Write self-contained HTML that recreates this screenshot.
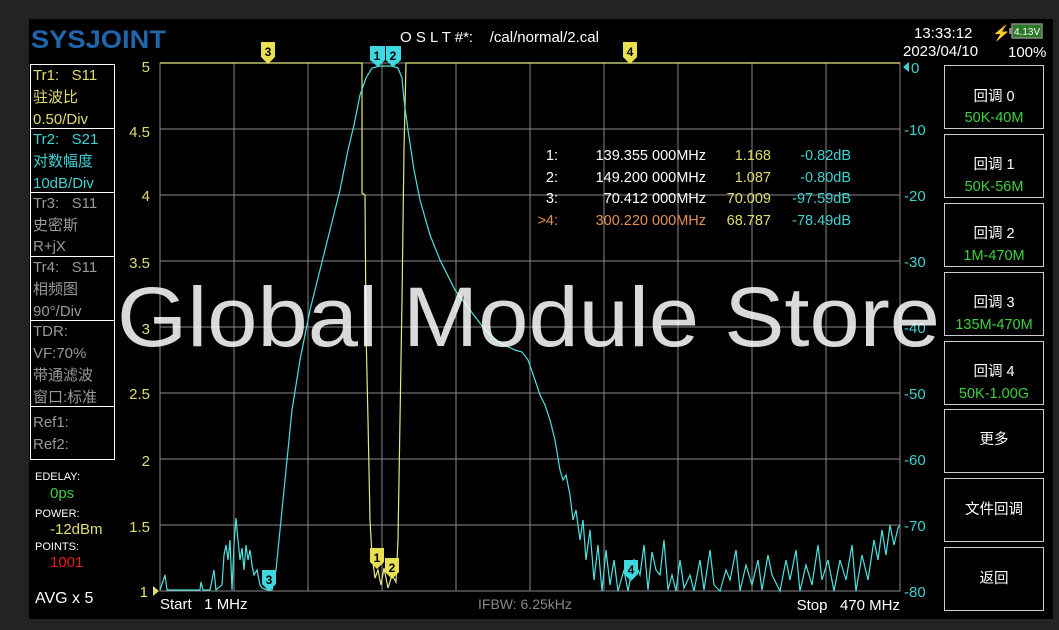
<!DOCTYPE html>
<html><head><meta charset="utf-8"><style>
html,body{margin:0;padding:0;background:#232323;}
svg{display:block}
text{font-family:"Liberation Sans","Noto Sans CJK SC",sans-serif;white-space:pre;}
</style></head><body>
<svg width="1059" height="630" viewBox="0 0 1059 630" xmlns="http://www.w3.org/2000/svg" xml:space="preserve">
<rect x="0" y="0" width="1059" height="630" fill="#232323"/>
<rect x="29" y="19" width="1024" height="600" fill="#000"/>
<text x="31" y="48" font-size="25" font-weight="bold" fill="#1f66ad" textLength="135" lengthAdjust="spacingAndGlyphs">SYSJOINT</text>
<text x="400" y="42" font-size="15" fill="#fff">O S L T #*:    /cal/normal/2.cal</text>
<text x="914" y="38" font-size="15" fill="#fff">13:33:12</text>
<text x="992" y="38" font-size="15" fill="#f0c020">⚡</text>
<rect x="1012" y="24" width="30" height="14" fill="#2a7a2a" stroke="#888" stroke-width="1.5"/>
<rect x="1009" y="28" width="3" height="6" fill="#888"/>
<text x="1014" y="35" font-size="10" fill="#fff">4.13V</text>
<text x="903" y="56" font-size="15" fill="#fff">2023/04/10</text>
<text x="1008" y="57" font-size="15" fill="#fff">100%</text>
<g stroke="#888" stroke-width="1">
<line x1="234" y1="63" x2="234" y2="591"/><line x1="308" y1="63" x2="308" y2="591"/><line x1="382" y1="63" x2="382" y2="591"/><line x1="456" y1="63" x2="456" y2="591"/><line x1="530" y1="63" x2="530" y2="591"/><line x1="604" y1="63" x2="604" y2="591"/><line x1="678" y1="63" x2="678" y2="591"/><line x1="752" y1="63" x2="752" y2="591"/><line x1="826" y1="63" x2="826" y2="591"/>
<line x1="160" y1="129" x2="900" y2="129"/><line x1="160" y1="195" x2="900" y2="195"/><line x1="160" y1="261" x2="900" y2="261"/><line x1="160" y1="327" x2="900" y2="327"/><line x1="160" y1="393" x2="900" y2="393"/><line x1="160" y1="459" x2="900" y2="459"/><line x1="160" y1="525" x2="900" y2="525"/>
<rect x="160" y="63" width="740" height="528" fill="none"/>
</g>
<g font-size="15" fill="#e0dc70" text-anchor="end">
<text x="150" y="72">5</text><text x="150" y="137">4.5</text><text x="150" y="201">4</text><text x="150" y="268">3.5</text><text x="150" y="334">3</text><text x="150" y="399">2.5</text><text x="150" y="466">2</text><text x="150" y="532">1.5</text><text x="148" y="597">1</text>
</g>
<polygon points="153,586 159,591 153,596" fill="#e0dc70"/>
<g font-size="15" fill="#40d0d0">
<text x="911" y="73">0</text><text x="904" y="135">-10</text><text x="904" y="201">-20</text><text x="904" y="267">-30</text><text x="904" y="333">-40</text><text x="904" y="399">-50</text><text x="904" y="465">-60</text><text x="904" y="531">-70</text><text x="904" y="597">-80</text>
</g>
<polygon points="909,62 903,67 909,72" fill="#40d0d0"/>
<polyline fill="none" stroke="#e8e880" stroke-width="1.2" points="160,63 362,63 362,193 365,195 366,330 368,420 370,520 372,555 375,578 378,570 381,585 384,568 388,588 392,575 396,582 398,540 400,420 402,300 404,150 406,63 900,63"/>
<polyline fill="none" stroke="#50e0e0" stroke-width="1.2" points="160,590 165,575 167,590 200,590 201,582 203,590 210,590 214,570 216,590 222,585 224,555 226,545 228,560 230,540 232,590 234,545 236,518 238,540 240,560 242,548 244,570 246,545 248,560 250,550 252,565 254,575 257,570 260,585 262,588 268,590 272,590 276,570 280,530 286,470 292,410 300,360 310,310 320,270 330,230 340,190 348,150 354,125 360,95 366,78 372,68 380,66 392,66 398,68 402,78 404,100 408,130 414,170 420,200 430,235 440,260 455,290 470,310 485,330 500,343 515,350 522,352 528,360 535,380 540,395 545,405 550,420 555,440 560,470 563,480 566,475 570,495 573,520 576,510 580,540 583,520 586,560 590,530 594,580 598,545 602,591 606,550 610,585 614,560 618,591 624,570 628,591 634,560 640,575 644,545 648,590 652,552 656,570 660,575 664,540 668,590 672,575 676,591 680,560 684,588 690,575 694,591 700,560 704,590 710,550 714,585 720,591 726,570 730,580 736,550 740,591 746,565 752,585 758,560 762,590 768,555 772,575 780,591 786,560 790,580 796,550 800,591 806,565 812,585 818,545 822,580 828,560 834,591 840,560 846,580 852,545 856,591 862,555 868,580 874,540 878,560 882,530 886,555 890,525 894,545 898,528 900,525"/>
<g font-size="12" font-weight="bold" text-anchor="middle">
<polygon points="261,42 275,42 275,57 268,64 261,57" fill="#e8e050"/><text x="268" y="56" fill="#000">3</text>
<polygon points="370,46 385,46 385,60 378,67 370,60" fill="#40d8e0"/><text x="377" y="60" fill="#000">1</text>
<polygon points="386,46 401,46 401,60 393,67 386,60" fill="#40d8e0"/><text x="393" y="60" fill="#000">2</text>
<polygon points="623,42 637,42 637,57 630,64 623,57" fill="#e8e050"/><text x="630" y="56" fill="#000">4</text>
<polygon points="370,548 384,548 384,562 377,569 370,562" fill="#e8e050"/><text x="377" y="562" fill="#000">1</text>
<polygon points="385,558 399,558 399,572 392,579 385,572" fill="#e8e050"/><text x="392" y="572" fill="#000">2</text>
<polygon points="262,570 276,570 276,584 269,591 262,584" fill="#40d8e0"/><text x="269" y="584" fill="#000">3</text>
<polygon points="624,560 638,560 638,574 631,581 624,574" fill="#40d8e0"/><text x="631" y="574" fill="#000">4</text>
</g>
<g font-size="14.5">
<g fill="#fff" text-anchor="end"><text x="558" y="160">1:</text><text x="558" y="182">2:</text><text x="558" y="203">3:</text></g>
<text x="558" y="225" fill="#e09050" text-anchor="end">&gt;4:</text>
<g fill="#fff" text-anchor="end"><text x="706" y="160">139.355 000MHz</text><text x="706" y="182">149.200 000MHz</text><text x="706" y="203">70.412 000MHz</text></g>
<text x="706" y="225" fill="#e09050" text-anchor="end">300.220 000MHz</text>
<g fill="#e0dc70" text-anchor="end"><text x="771" y="160">1.168</text><text x="771" y="182">1.087</text><text x="771" y="203">70.009</text><text x="771" y="225">68.787</text></g>
<g fill="#40d0d0" text-anchor="end"><text x="851" y="160">-0.82dB</text><text x="851" y="182">-0.80dB</text><text x="851" y="203">-97.59dB</text><text x="851" y="225">-78.49dB</text></g>
</g>
<text x="160" y="609" font-size="15" fill="#fff">Start   1 MHz</text>
<text x="478" y="609" font-size="14" fill="#888">IFBW: 6.25kHz</text>
<text x="900" y="610" font-size="15" fill="#fff" text-anchor="end">Stop   470 MHz</text>
<g fill="none" stroke="#fff" stroke-width="1">
<rect x="30.5" y="64.5" width="84" height="64"/><rect x="30.5" y="128.5" width="84" height="64"/><rect x="30.5" y="192.5" width="84" height="64"/><rect x="30.5" y="256.5" width="84" height="64"/><rect x="30.5" y="320.5" width="84" height="86"/><rect x="30.5" y="406.5" width="84" height="53"/>
</g>
<g font-size="15">
<g fill="#e0dc70"><text x="33" y="80">Tr1:   S11</text><text x="33" y="102">驻波比</text><text x="33" y="124">0.50/Div</text></g>
<g fill="#40d0d0"><text x="33" y="144">Tr2:   S21</text><text x="33" y="166">对数幅度</text><text x="33" y="188">10dB/Div</text></g>
<g fill="#999"><text x="33" y="208">Tr3:   S11</text><text x="33" y="230">史密斯</text><text x="33" y="251">R+jX</text>
<text x="33" y="272">Tr4:   S11</text><text x="33" y="294">相频图</text><text x="33" y="316">90°/Div</text>
<text x="33" y="336">TDR:</text><text x="33" y="358">VF:70%</text><text x="33" y="380">带通滤波</text><text x="33" y="402">窗口:标准</text>
<text x="33" y="427">Ref1:</text><text x="33" y="449">Ref2:</text></g>
</g>
<g font-size="11" fill="#fff"><text x="35" y="480">EDELAY:</text><text x="35" y="517">POWER:</text><text x="35" y="550">POINTS:</text></g>
<text x="50" y="498" font-size="15" fill="#40d040">0ps</text>
<text x="50" y="534" font-size="15" fill="#e0dc70">-12dBm</text>
<text x="50" y="567" font-size="15" fill="#e02020">1001</text>
<text x="35" y="603" font-size="16" fill="#fff">AVG x 5</text>
<g fill="none" stroke="#ccc" stroke-width="1">
<rect x="944.5" y="65.5" width="99" height="63"/><rect x="944.5" y="134.5" width="99" height="63"/><rect x="944.5" y="203.5" width="99" height="63"/><rect x="944.5" y="272.5" width="99" height="63"/><rect x="944.5" y="341.5" width="99" height="63"/><rect x="944.5" y="409.5" width="99" height="63"/><rect x="944.5" y="478.5" width="99" height="63"/><rect x="944.5" y="547.5" width="99" height="63"/>
</g>
<g font-size="14.5" text-anchor="middle">
<g fill="#fff"><text x="994" y="101">回调 0</text><text x="994" y="169">回调 1</text><text x="994" y="238">回调 2</text><text x="994" y="307">回调 3</text><text x="994" y="376">回调 4</text><text x="994" y="444">更多</text><text x="994" y="514">文件回调</text><text x="994" y="583">返回</text></g>
<g fill="#40d040"><text x="994" y="122">50K-40M</text><text x="994" y="191">50K-56M</text><text x="994" y="260">1M-470M</text><text x="994" y="329">135M-470M</text><text x="994" y="398">50K-1.00G</text></g>
</g>
<text x="117" y="346" font-size="84" fill="#fff" fill-opacity="0.85" textLength="823" lengthAdjust="spacingAndGlyphs">Global Module Store</text>
</svg>
</body></html>
